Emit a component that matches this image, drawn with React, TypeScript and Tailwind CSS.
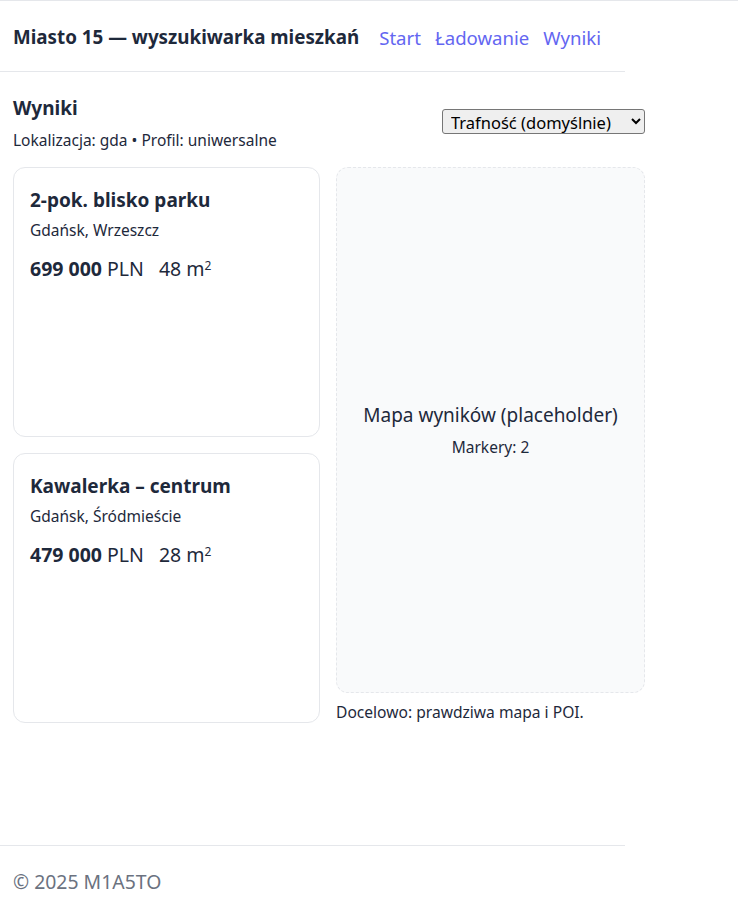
const listings = [
  { id: 1, title: "2-pok. blisko parku", place: "Gdańsk, Wrzeszcz", price: "699 000", area: 48 },
  { id: 2, title: "Kawalerka – centrum", place: "Gdańsk, Śródmieście", price: "479 000", area: 28 },
];

const ListingCard = ({ item }: { item: (typeof listings)[number] }) => (
  <div className="h-[270px] rounded-[12px] border border-[#e5e7eb] bg-white px-4 py-5">
    <h3 className="text-[19px] font-bold leading-[24px]">{item.title}</h3>
    <p className="mt-[8px] text-[15.5px] leading-[20px]">{item.place}</p>
    <p className="mt-[17px] text-[19.5px] leading-[24px]">
      <span className="font-bold">{item.price}</span> PLN
      <span className="ml-[15px]">
        {item.area} m<sup className="text-[12px]">2</sup>
      </span>
    </p>
  </div>
);

export default function App() {
  return (
    <div
      className="min-h-[905px] border-t border-[#e5e7eb] bg-white text-[#1e293b]"
      style={{ fontFamily: '"Noto Sans", "Open Sans", sans-serif' }}
    >
      <header className="flex h-[71px] w-[625px] items-center gap-4 border-b border-[#e5e7eb] px-[13px] pt-[3px]">
        <h1 className="mr-1 text-[18.8px] font-bold">Miasto 15 — wyszukiwarka mieszkań</h1>
        <nav className="flex gap-[14px] text-[18.6px] text-[#6366f1]">
          <a href="#">Start</a>
          <a href="#">Ładowanie</a>
          <a href="#">Wyniki</a>
        </nav>
      </header>

      <main className="w-[645px] pl-[13px] pt-[24px]">
        <div className="flex items-start justify-between">
          <div>
            <h2 className="text-[19px] font-bold leading-[24px]">Wyniki</h2>
            <p className="mt-[10px] text-[15.5px] leading-[20px]">Lokalizacja: gda • Profil: uniwersalne</p>
          </div>
          <select className="mt-[13px] h-[25px] w-[203px] rounded-[3px] border border-[#767676] bg-[#efefef] px-1 text-[16.5px] text-black">
            <option>Trafność (domyślnie)</option>
          </select>
        </div>

        <div className="mt-[17px] grid grid-cols-[307px_309px] gap-4">
          <div className="flex flex-col gap-4">
            {listings.map((l) => (
              <ListingCard key={l.id} item={l} />
            ))}
          </div>
          <div>
            <div className="flex h-[526px] flex-col items-center justify-center rounded-[12px] border border-dashed border-[#e5e7eb] bg-[#f9fafb]">
              <p className="text-[19px]">Mapa wyników (placeholder)</p>
              <p className="mt-[6px] text-[15.5px]">Markery: 2</p>
            </div>
            <p className="mt-[8px] text-[15.6px]">Docelowo: prawdziwa mapa i POI.</p>
          </div>
        </div>
      </main>

      <footer className="mt-[121px] w-[625px] border-t border-[#e5e7eb] px-[13px] pt-[21px] text-[19.4px] text-[#6b7280]">
        © 2025 M1A5TO
      </footer>
    </div>
  );
}
